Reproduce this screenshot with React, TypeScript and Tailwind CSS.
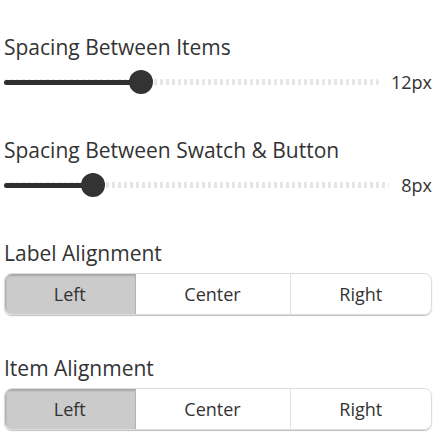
import React from "react";

const font = { fontFamily: '"Open Sans", "Noto Sans", sans-serif' };

function Slider({ pct, value }: { pct: number; value: string }) {
  return (
    <div className="flex items-center h-[24px] gap-[12px]">
      <div className="relative flex-1 h-[24px]">
        <div className="absolute left-0 right-0 top-[9px] h-[6px] bg-[repeating-linear-gradient(90deg,#e6e6e6_0_3px,transparent_3px_6px)] rounded-full" />
        <div
          className="absolute left-0 top-[9.5px] h-[5px] bg-[#2f2f2f] rounded-full"
          style={{ width: `${pct}%` }}
        />
        <div
          className="absolute top-0 w-[24px] h-[24px] -ml-[12px] rounded-full bg-[#333333]"
          style={{ left: `${pct}%` }}
        />
      </div>
      <span className="text-[18px] leading-[24px] text-[#333]">{value}</span>
    </div>
  );
}

function Segmented() {
  return (
    <div className="flex h-[42px] rounded-[8px] border border-[#dcdcdc] shadow-[0_1px_1px_rgba(0,0,0,0.25)] overflow-hidden text-[18px] text-[#333]">
      <div className="flex-auto px-[10px] flex items-center justify-center bg-[#cbcbcb] border-r border-[#b3b3b3] shadow-[inset_1px_2px_2px_rgba(0,0,0,0.18)]">
        Left
      </div>
      <div className="flex-auto px-[10px] flex items-center justify-center bg-white border-r border-[#e3e3e3]">
        Center
      </div>
      <div className="flex-auto px-[10px] flex items-center justify-center bg-white">
        Right
      </div>
    </div>
  );
}

export default function App() {
  return (
    <div className="w-[445px] h-[446px] bg-white pl-[4px] pr-[13px] pt-[32.5px]" style={font}>
      <div className="text-[21px] leading-[28px] text-[#333]">Spacing Between Items</div>
      <div className="mt-[9.5px]">
        <Slider pct={36.6} value="12px" />
      </div>
      <div className="mt-[42px] text-[21px] leading-[28px] text-[#333]">
        Spacing Between Swatch &amp; Button
      </div>
      <div className="mt-[9px]">
        <Slider pct={23.2} value="8px" />
      </div>
      <div className="mt-[42px] text-[21px] leading-[28px] text-[#333]">Label Alignment</div>
      <div className="mt-[6px]">
        <Segmented />
      </div>
      <div className="mt-[39px] text-[21px] leading-[28px] text-[#333]">Item Alignment</div>
      <div className="mt-[6px]">
        <Segmented />
      </div>
    </div>
  );
}
